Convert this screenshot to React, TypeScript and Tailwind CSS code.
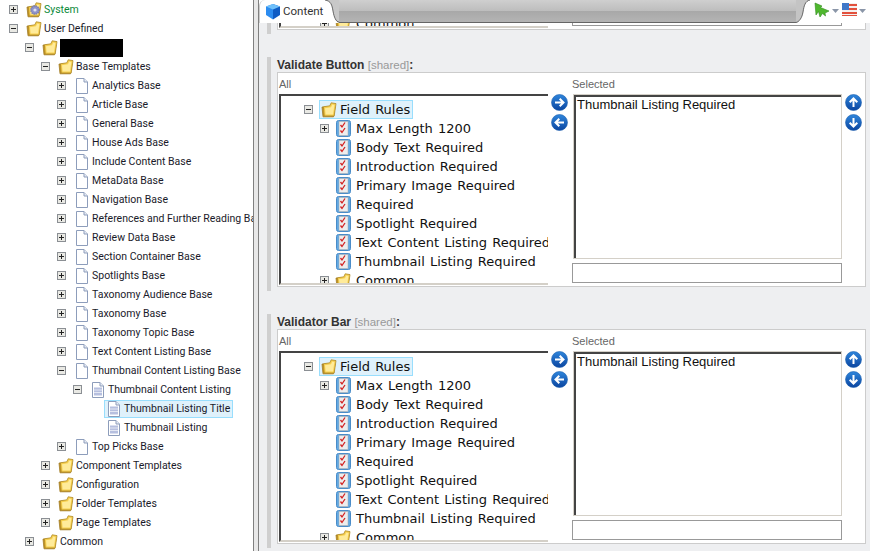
import { useId } from 'react';

type TreeRow = {
  label: string;
  depth: number;
  toggle?: 'plus' | 'minus';
  icon: 'folder' | 'system' | 'file' | 'template';
  selected?: boolean;
  redacted?: boolean;
  green?: boolean;
};

const file = (label: string): TreeRow => ({ label, depth: 3, toggle: 'plus', icon: 'file' });
const folder = (label: string, depth = 2): TreeRow => ({ label, depth, toggle: 'plus', icon: 'folder' });

const TREE: TreeRow[] = [
  { label: 'System', depth: 0, toggle: 'plus', icon: 'system', green: true },
  { label: 'User Defined', depth: 0, toggle: 'minus', icon: 'folder' },
  { label: '', depth: 1, toggle: 'minus', icon: 'folder', redacted: true },
  { label: 'Base Templates', depth: 2, toggle: 'minus', icon: 'folder' },
  file('Analytics Base'),
  file('Article Base'),
  file('General Base'),
  file('House Ads Base'),
  file('Include Content Base'),
  file('MetaData Base'),
  file('Navigation Base'),
  file('References and Further Reading Base'),
  file('Review Data Base'),
  file('Section Container Base'),
  file('Spotlights Base'),
  file('Taxonomy Audience Base'),
  file('Taxonomy Base'),
  file('Taxonomy Topic Base'),
  file('Text Content Listing Base'),
  { label: 'Thumbnail Content Listing Base', depth: 3, toggle: 'minus', icon: 'file' },
  { label: 'Thumbnail Content Listing', depth: 4, toggle: 'minus', icon: 'template' },
  { label: 'Thumbnail Listing Title', depth: 5, icon: 'template', selected: true },
  { label: 'Thumbnail Listing', depth: 5, icon: 'template' },
  file('Top Picks Base'),
  folder('Component Templates'),
  folder('Configuration'),
  folder('Folder Templates'),
  folder('Page Templates'),
  folder('Common', 1),
];

const RULES = [
  'Body Text Required',
  'Introduction Required',
  'Primary Image Required',
  'Required',
  'Spotlight Required',
  'Text Content Listing Required',
  'Thumbnail Listing Required',
];

function Toggle({ kind }: { kind: 'plus' | 'minus' }) {
  return (
    <svg width="9" height="9" viewBox="0 0 9 9" className="shrink-0">
      <rect x="0.5" y="0.5" width="8" height="8" fill="#e9e9e4" stroke="#8b8f94" />
      <path d={kind === 'plus' ? 'M2 4.5h5M4.5 2v5' : 'M2 4.5h5'} stroke="#222" />
    </svg>
  );
}

function FolderIcon({ gear }: { gear?: boolean }) {
  return (
    <svg width="16" height="16" viewBox="0 0 16 16" className="shrink-0">
      <path d="M1 5 2 14.800h10.500L14 5z" fill="#c9941a" stroke="#a07c28" strokeWidth="0.800" />
      <path d="M3.200 14 2.400 4.800 8.800 3.800 10.200.800 15 1.600l-1.800 12.400z" fill="#f6cf4e" stroke="#b08a2a" strokeWidth="0.800" />
      <path d="M4.600 12.600 4 6.200 10 5.200l1.200-2.700 2.200.4-1.400 9.700z" fill="#ffeb9a" />
      {gear && (
        <>
          <circle cx="9" cy="8" r="4.200" fill="#8f93c9" stroke="#6f73a8" strokeDasharray="1.400 0.800" strokeWidth="1.200" />
          <circle cx="9" cy="8" r="1.600" fill="#dfe1f2" />
        </>
      )}
    </svg>
  );
}

function PageIcon({ lined }: { lined?: boolean }) {
  return (
    <svg width="14" height="16" viewBox="0 0 14 16" className="shrink-0">
      <path d="M1.500.500h7.500l3.500 3.500v11.500h-11z" fill="#fff" stroke="#8d9dbb" />
      <path d="M9 .500V4h3.500" fill="#e6ebf5" stroke="#8d9dbb" />
      {lined && <rect x="3" y="5.500" width="8" height="8" fill="#b6bfdf" />}
      {lined && <path d="M3 8h8M3 10.500h8" stroke="#e3e7f3" />}
    </svg>
  );
}

function RuleIcon() {
  return (
    <svg width="15" height="17" viewBox="0 0 15 17" className="shrink-0">
      <rect x="0.500" y="0.500" width="14" height="16" rx="2" fill="#62aae4" stroke="#4a8cc8" />
      <rect x="3" y="1.500" width="9" height="14" fill="#ededed" stroke="#a8a8a8" strokeWidth="0.500" />
      <path d="M4.500 5 6 7l3-4.500M4.500 10.500 6 12.500l3-4.500" fill="none" stroke="#d22222" strokeWidth="1.300" />
    </svg>
  );
}

function ArrowButton({ dir }: { dir: 'left' | 'right' | 'up' | 'down' }) {
  const id = useId();
  const paths = {
    right: 'M4 8.500h8.500M8.700 4.700l3.800 3.800-3.800 3.800',
    left: 'M13 8.500H4.500M8.300 4.700 4.500 8.500l3.800 3.800',
    up: 'M8.500 13V4.500M4.700 8.300l3.800-3.800 3.800 3.800',
    down: 'M8.500 4v8.500M4.700 8.700l3.800 3.800 3.800-3.800',
  };
  return (
    <svg width="17" height="17" viewBox="0 0 17 17" className="block">
      <defs>
        <linearGradient id={id} x1="0" y1="0" x2="0" y2="1">
          <stop offset="0" stopColor="#2f86dc" />
          <stop offset="1" stopColor="#0b45a0" />
        </linearGradient>
      </defs>
      <circle cx="8.500" cy="8.500" r="8" fill={`url(#${id})`} stroke="#1c5fae" strokeWidth="0.600" />
      <path d={paths[dir]} fill="none" stroke="#fff" strokeWidth="2" />
    </svg>
  );
}

function SideTree() {
  return (
    <div className="w-[253px] shrink-0 overflow-hidden bg-white font-['Roboto',sans-serif] text-[10.5px] text-[#1a1a2a]">
      {TREE.map((row, i) => (
        <div
          key={i}
          className="flex h-[19px] items-center whitespace-nowrap"
          style={{ paddingLeft: 9 + row.depth * 16 }}
        >
          <div className="flex w-[16px] shrink-0 items-center">{row.toggle && <Toggle kind={row.toggle} />}</div>
          <div
            className={
              row.selected
                ? 'flex h-[18px] items-center gap-[2px] border border-[#99defd] bg-[#dff1fb] pr-[2px] -ml-px'
                : 'flex items-center gap-[2px]'
            }
          >
            <div className="flex w-[17px] shrink-0 justify-center">
              {row.icon === 'folder' && <FolderIcon />}
              {row.icon === 'system' && <FolderIcon gear />}
              {row.icon === 'file' && <PageIcon />}
              {row.icon === 'template' && <PageIcon lined />}
            </div>
            {row.redacted ? (
              <div className="h-[18px] w-[63px] bg-black" />
            ) : (
              <span className={row.green ? 'pt-[1px] text-[#0a8a3a]' : 'pt-[1px]'}>{row.label}</span>
            )}
          </div>
        </div>
      ))}
    </div>
  );
}

function RuleTree() {
  return (
    <div className="h-full overflow-hidden border-t-2 border-b-2 border-l-2 border-t-[#444] border-b-[#d4d0c8] border-l-[#444] bg-white pt-[4px] font-['DejaVu_Sans',sans-serif] text-[13px] [word-spacing:1px] text-[#111]">
      <div className="flex h-[19px] items-center whitespace-nowrap pl-[23px]">
        <Toggle kind="minus" />
        <div className="ml-[6px] flex h-[19px] w-[94px] items-center gap-[3px] border border-[#99defd] bg-[#dff1fb] pl-[1px]">
          <FolderIcon />
          <span>Field Rules</span>
        </div>
      </div>
      <div className="flex h-[19px] items-center whitespace-nowrap pl-[39px]">
        <Toggle kind="plus" />
        <div className="ml-[7px] flex items-center gap-[5px]">
          <RuleIcon />
          <span>Max Length 1200</span>
        </div>
      </div>
      {RULES.map((rule) => (
        <div key={rule} className="flex h-[19px] items-center whitespace-nowrap pl-[55px]">
          <div className="flex items-center gap-[5px]">
            <RuleIcon />
            <span>{rule}</span>
          </div>
        </div>
      ))}
      <div className="flex h-[19px] items-center whitespace-nowrap pl-[39px]">
        <Toggle kind="plus" />
        <div className="ml-[6px] flex items-center gap-[5px]">
          <FolderIcon />
          <span>Common</span>
        </div>
      </div>
    </div>
  );
}

function Section({ label }: { label: string }) {
  return (
    <section className="mb-[23px] flex h-[234px] pl-[8px]">
      <div className="w-[4px] shrink-0 bg-[#cfcfcf]" />
      <div className="ml-[6px] mr-[4px] flex min-w-0 flex-1 flex-col">
        <div className="h-[15px] whitespace-nowrap font-['Liberation_Sans',sans-serif] text-[12px] font-bold leading-[16px] text-[#333]">
          {label} <span className="text-[11.5px] font-normal text-[#999]">[shared]</span>:
        </div>
        <div className="flex h-[215px] border border-[#ccc] bg-white pl-[1px] font-['Liberation_Sans',sans-serif]">
          <div className="flex w-[269px] shrink-0 flex-col">
            <div className="h-[21px] pt-[4px] text-[11px] leading-[15px] text-[#666]">All</div>
            <div className="h-[191px]">
              <RuleTree />
            </div>
          </div>
          <div className="flex w-[24px] shrink-0 flex-col items-center gap-[3px] pt-[21px] pr-[1px]">
            <ArrowButton dir="right" />
            <ArrowButton dir="left" />
          </div>
          <div className="flex w-[270px] shrink-0 flex-col">
            <div className="h-[21px] pt-[4px] text-[11px] leading-[15px] text-[#666]">Selected</div>
            <div className="ml-px h-[165px] border border-[#d4d0c8]">
              <div className="h-full border-t-2 border-l-2 border-t-[#444] border-l-[#444] bg-white pl-[1px] font-['Liberation_Sans',sans-serif] text-[13px] leading-[16px] text-[#111]">
                Thumbnail Listing Required
              </div>
            </div>
            <div className="mt-[4px] h-[20px] border border-[#999] bg-white" />
          </div>
          <div className="flex w-[24px] shrink-0 flex-col items-center gap-[3px] pt-[21px] pr-[2px]">
            <ArrowButton dir="up" />
            <ArrowButton dir="down" />
          </div>
        </div>
      </div>
    </section>
  );
}

function TabBar() {
  return (
    <div className="flex h-[23px] shrink-0 bg-white">
      <div className="flex w-[66px] items-center gap-[2px] rounded-tl-[6px] border-l border-[#ccc] pl-[5px]">
        <svg width="16" height="17" viewBox="0 0 16 17" className="shrink-0">
          <path d="M8 1 15 3.500V12l-7 4.500z" fill="#0e5bc4" />
          <path d="M8 1 1 3.500V12l7 4.500z" fill="#2c8cf0" />
          <path d="M1 3.500 8 1l7 2.500L8 6.500z" fill="#6fc0fa" />
        </svg>
        <span className="font-['Roboto',sans-serif] text-[11.5px] text-[#333]">Content</span>
      </div>
      <svg width="14" height="23" viewBox="0 0 14 23" className="shrink-0">
        <path d="M0 0C6 1 7 5 8 11c1 6 3 11 6 12V0z" fill="#c8c8c8" />
        <path d="M0 0C6 1 7 5 8 11c1 6 3 11 6 11" fill="none" stroke="#666" />
      </svg>
      <div className="flex flex-1 flex-col border-b border-[#666]">
        <div className="h-[11px] bg-gradient-to-b from-[#cfcfcf] to-[#bdbdbd]" />
        <div className="flex-1 bg-gradient-to-b from-[#a8a8a8] to-[#b4b4b4]" />
      </div>
      <svg width="14" height="23" viewBox="0 0 14 23" className="shrink-0">
        <path d="M14 0C9 1 8 6 7 12 6 18 3 22 0 23V0z" fill="#c4c4c4" />
        <path d="M14 0C9 1 8 6 7 12 6 18 3 22 0 22.500" fill="none" stroke="#666" />
      </svg>
      <div className="flex w-[60px] shrink-0 items-start gap-[2px] pt-[2px] pl-[4px]">
        <svg width="16" height="16" viewBox="0 0 16 16" className="shrink-0">
          <path d="M1 1 8 4l-1.500 1.500L15 9l-4 2 .5 3-3-2.500L6 15 4.500 9.500 2 13z" fill="#4fb82e" stroke="#2f8a1c" strokeWidth="0.600" />
        </svg>
        <svg width="7" height="4" viewBox="0 0 7 4" className="mt-[7px] shrink-0">
          <path d="M0 0h7L3.500 4z" fill="#8a96a8" />
        </svg>
        <svg width="15" height="13" viewBox="0 0 15 13" className="ml-[1px] mt-[1px] shrink-0">
          <rect width="15" height="13" fill="#f4f0ee" />
          <path d="M0 1h15v2H0zM0 5h15v2H0zM0 9h15v2H0zM0 12h15v1H0z" fill="#e2503c" />
          <rect width="7" height="7" fill="#3f78c8" />
        </svg>
        <svg width="7" height="4" viewBox="0 0 7 4" className="mt-[7px] shrink-0">
          <path d="M0 0h7L3.500 4z" fill="#8a96a8" />
        </svg>
      </div>
    </div>
  );
}

export default function App() {
  return (
    <div className="flex h-[551px] w-[870px] overflow-hidden bg-white">
      <SideTree />
      <div className="w-[6px] shrink-0 border-x border-x-[#808080] bg-[#e8e8e8]" />
      <div className="flex min-w-0 flex-1 flex-col bg-[#eeeff1]">
        <TabBar />
        <div className="min-h-0 flex-1 overflow-hidden">
          {/* previous field is scrolled almost out of view */}
          <div className="mt-[-223px]">
            <Section label="Validate Field" />
            <Section label="Validate Button" />
            <Section label="Validator Bar" />
          </div>
        </div>
      </div>
    </div>
  );
}
